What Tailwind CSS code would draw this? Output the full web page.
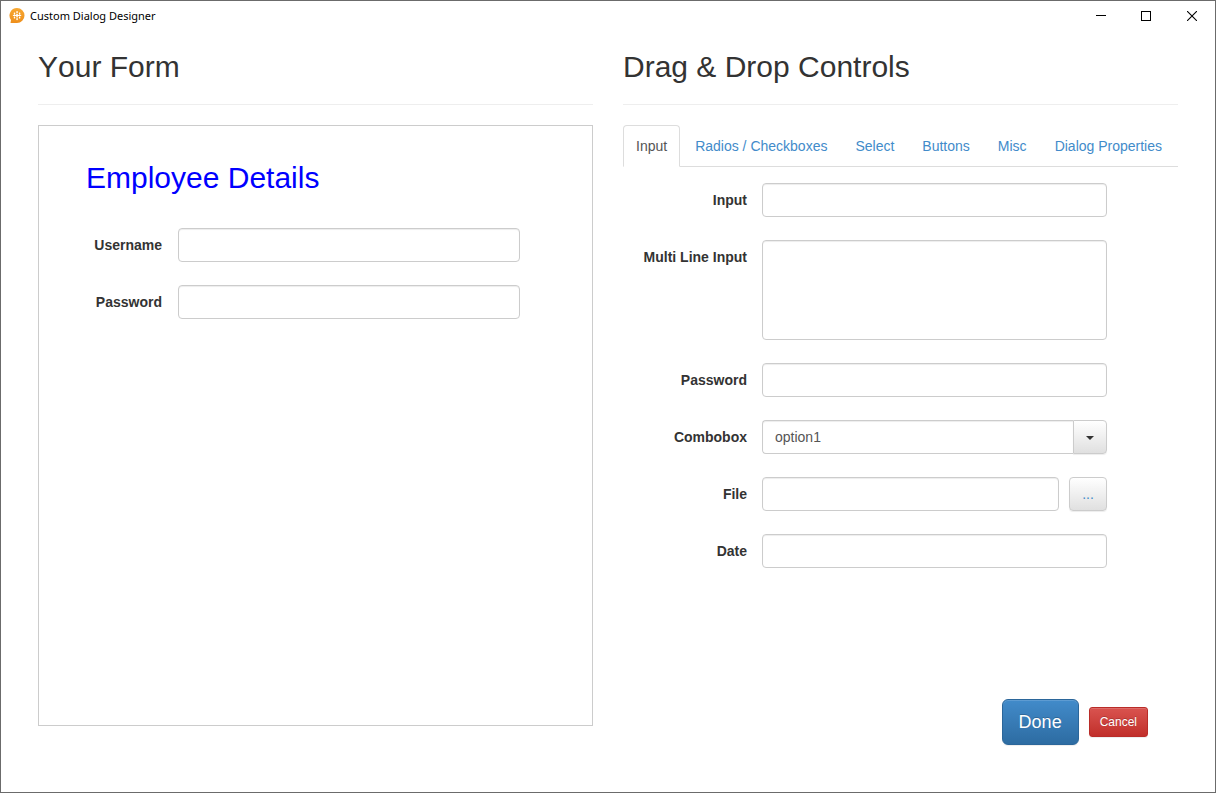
<!DOCTYPE html>
<html lang="en">
<head>
<meta charset="utf-8">
<meta name="viewport" content="width=device-width, initial-scale=1">
<title>Custom Dialog Designer</title>
<script src="https://cdn.jsdelivr.net/npm/@tailwindcss/browser@4"></script>
</head>
<body class="flex min-h-screen flex-col border border-[#6b6b6b] bg-white font-['Liberation_Sans',Arial,sans-serif] text-sm leading-5 text-[#333]">
  <header class="flex h-[30px] items-center pl-2 text-black">
    <svg class="size-4" viewBox="0 0 16 16" aria-hidden="true">
      <defs><linearGradient id="logo" x1="0" y1="0" x2="0" y2="1"><stop offset="0" stop-color="#f7a833"/><stop offset="1" stop-color="#ee8f1c"/></linearGradient></defs>
      <path d="M8 0a7.500 7.500 0 1 1 0 15H1.500L2 12A7.500 7.500 0 0 1 8 0Z" fill="url(#logo)"/>
      <g fill="#fff"><rect x="7.300" y="3" width="1.500" height="2.200" rx=".7"/><rect x="7.300" y="5.800" width="1.500" height="3.600" rx=".5"/><rect x="7.300" y="10" width="1.500" height="2.200" rx=".7"/><rect x="4.800" y="4.500" width="1.400" height="2.200" rx=".5"/><rect x="4.800" y="8.400" width="1.400" height="2.200" rx=".5"/><rect x="9.900" y="4.500" width="1.400" height="2.200" rx=".5"/><rect x="9.900" y="8.400" width="1.400" height="2.200" rx=".5"/><rect x="3.800" y="7" width="8.500" height="1.100" rx=".5"/></g>
    </svg>
    <h1 class="ml-[5px] font-['Noto_Sans','Open_Sans',sans-serif] text-[11px] leading-4">Custom Dialog Designer</h1>
    <div class="ml-auto flex h-full">
      <button type="button" aria-label="Minimize" class="grid w-[44px] place-items-center"><svg class="size-[10px]" viewBox="0 0 10 10" stroke="#000" shape-rendering="crispEdges"><path d="M0 4.500h10"/></svg></button>
      <button type="button" aria-label="Maximize" class="grid w-[46px] place-items-center"><svg class="size-[10px]" viewBox="0 0 10 10" fill="none" stroke="#000" shape-rendering="crispEdges"><path d="M.5 .5h9v9h-9z"/></svg></button>
      <button type="button" aria-label="Close" class="grid w-[46px] place-items-center"><svg class="size-[10px]" viewBox="0 0 10 10" stroke="#000" stroke-width="1.100"><path d="M0 0l10 10M10 0L0 10"/></svg></button>
    </div>
  </header>

  <main class="grid flex-1 grid-cols-2 gap-[30px] px-[37px] pt-[19px] pb-[47px]">
    <section class="flex flex-col">
      <h2 class="mb-5 border-b border-[#eee] pb-[21px] text-[30px] leading-[33px] [font-kerning:none]">Your Form</h2>
      <form class="mb-[19px] flex flex-1 flex-col border border-[#ccc] pt-[35px] pr-[72px] pl-[47px]">
        <h3 class="mb-[34px] text-[30px] leading-[33px] text-[#00f]">Employee Details</h3>
        <div class="flex flex-col gap-[23px]">
          <div class="flex gap-4">
            <label for="form-user" class="w-[76px] pt-[7px] text-right font-bold">Username</label>
            <input id="form-user" type="text" class="h-[34px] min-w-0 flex-1 rounded border border-[#ccc] px-3 text-[#555] shadow-[inset_0_1px_1px_rgba(0,0,0,0.075)]">
          </div>
          <div class="flex gap-4">
            <label for="form-pass" class="w-[76px] pt-[7px] text-right font-bold">Password</label>
            <input id="form-pass" type="password" class="h-[34px] min-w-0 flex-1 rounded border border-[#ccc] px-3 text-[#555] shadow-[inset_0_1px_1px_rgba(0,0,0,0.075)]">
          </div>
        </div>
      </form>
    </section>

    <section class="flex flex-col">
      <h2 class="mb-5 border-b border-[#eee] pb-[21px] text-[30px] leading-[33px] [font-kerning:none]">Drag &amp; Drop Controls</h2>
      <nav class="flex gap-[2px] border-b border-[#ddd] whitespace-nowrap text-[#428bca]">
        <a href="#input" aria-current="page" class="-mb-px rounded-t border border-[#ddd] border-b-white bg-white px-3 py-[10px] text-[#555]">Input</a>
        <a href="#radios" class="-mb-px border border-transparent px-3 py-[10px]">Radios / Checkboxes</a>
        <a href="#select" class="-mb-px border border-transparent px-3 py-[10px]">Select</a>
        <a href="#buttons" class="-mb-px border border-transparent px-3 py-[10px]">Buttons</a>
        <a href="#misc" class="-mb-px border border-transparent px-3 py-[10px]">Misc</a>
        <a href="#properties" class="-mb-px border border-transparent px-3 py-[10px]">Dialog Properties</a>
      </nav>
      <div class="mt-4 flex flex-col gap-[23px] pr-[71px]">
        <div class="flex gap-[15px]">
          <label for="c-input" class="w-[124px] pt-[7px] text-right font-bold">Input</label>
          <input id="c-input" type="text" class="h-[34px] min-w-0 flex-1 rounded border border-[#ccc] px-3 text-[#555] shadow-[inset_0_1px_1px_rgba(0,0,0,0.075)]">
        </div>
        <div class="flex gap-[15px]">
          <label for="c-multi" class="w-[124px] pt-[7px] text-right font-bold">Multi Line Input</label>
          <textarea id="c-multi" class="h-[100px] min-w-0 flex-1 resize-none rounded border border-[#ccc] px-3 py-[6px] text-[#555] shadow-[inset_0_1px_1px_rgba(0,0,0,0.075)]"></textarea>
        </div>
        <div class="flex gap-[15px]">
          <label for="c-pass" class="w-[124px] pt-[7px] text-right font-bold">Password</label>
          <input id="c-pass" type="password" class="h-[34px] min-w-0 flex-1 rounded border border-[#ccc] px-3 text-[#555] shadow-[inset_0_1px_1px_rgba(0,0,0,0.075)]">
        </div>
        <div class="flex gap-[15px]">
          <label for="c-combo" class="w-[124px] pt-[7px] text-right font-bold">Combobox</label>
          <div class="flex min-w-0 flex-1">
            <input id="c-combo" type="text" role="combobox" aria-expanded="false" value="option1" class="h-[34px] min-w-0 flex-1 rounded-l border border-r-0 border-[#ccc] px-3 text-[#555] shadow-[inset_0_1px_1px_rgba(0,0,0,0.075)]">
            <button type="button" aria-label="Show options" class="grid h-[34px] w-[34px] place-items-center rounded-r border border-[#ccc] bg-linear-to-b from-white to-[#e0e0e0] pt-[2px] shadow-[inset_0_1px_0_rgba(255,255,255,0.15),0_1px_1px_rgba(0,0,0,0.075)]"><svg class="h-1 w-2" viewBox="0 0 8 4" fill="#333"><path d="M0 0h8L4 4z"/></svg></button>
          </div>
        </div>
        <div class="flex gap-[15px]">
          <label for="c-file" class="w-[124px] pt-[7px] text-right font-bold">File</label>
          <div class="flex min-w-0 flex-1 gap-[10px]">
            <input id="c-file" type="text" class="h-[34px] min-w-0 flex-1 rounded border border-[#ccc] px-3 text-[#555] shadow-[inset_0_1px_1px_rgba(0,0,0,0.075)]">
            <button type="button" aria-label="Browse" class="h-[34px] w-[38px] rounded border border-[#ccc] bg-linear-to-b from-white to-[#e0e0e0] text-[#428bca] shadow-[inset_0_1px_0_rgba(255,255,255,0.15),0_1px_1px_rgba(0,0,0,0.075)]">...</button>
          </div>
        </div>
        <div class="flex gap-[15px]">
          <label for="c-date" class="w-[124px] pt-[7px] text-right font-bold">Date</label>
          <input id="c-date" type="text" class="h-[34px] min-w-0 flex-1 rounded border border-[#ccc] px-3 text-[#555] shadow-[inset_0_1px_1px_rgba(0,0,0,0.075)]">
        </div>
      </div>
      <div class="mt-auto flex items-center justify-end gap-[10px] pr-[30px]">
        <button type="button" class="h-[46px] rounded-md border border-[#2b669a] bg-linear-to-b from-[#428bca] to-[#2d6ca2] px-4 text-lg text-white text-shadow-[0_-1px_0_rgba(0,0,0,0.2)] shadow-[inset_0_1px_0_rgba(255,255,255,0.15),0_1px_1px_rgba(0,0,0,0.075)]">Done</button>
        <button type="button" class="h-[30px] rounded-[3px] border border-[#b92c28] bg-linear-to-b from-[#d9534f] to-[#c12e2a] px-[10px] text-xs text-white text-shadow-[0_-1px_0_rgba(0,0,0,0.2)] shadow-[inset_0_1px_0_rgba(255,255,255,0.15),0_1px_1px_rgba(0,0,0,0.075)]">Cancel</button>
      </div>
    </section>
  </main>
</body>
</html>
